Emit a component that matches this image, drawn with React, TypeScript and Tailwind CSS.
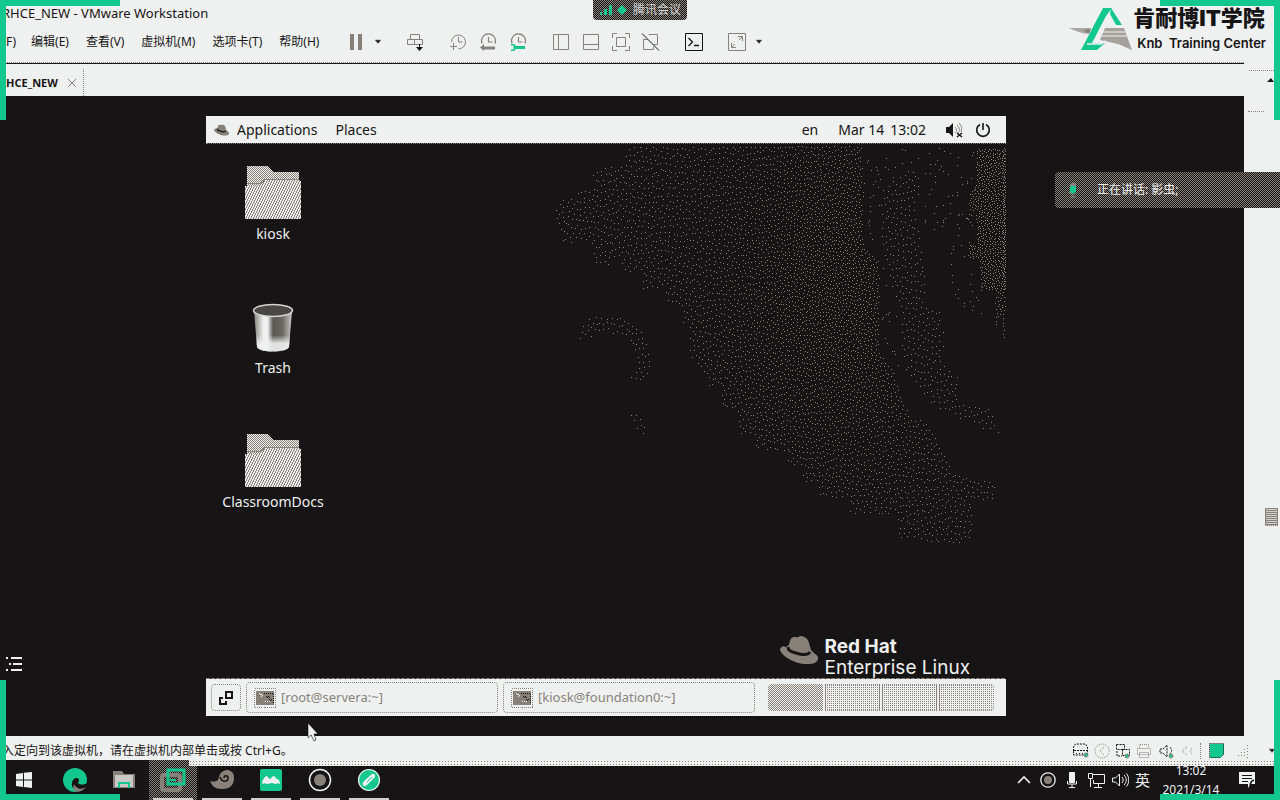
import type { ReactNode } from "react";

const INK = "#161415";
const GRAY = "#88817a";
const LIGHT = "#eff1f0";
const GREEN = "#12c88e";

const uiFont = "font-['Noto_Sans','Noto_Sans_CJK_SC',sans-serif]";

/* ---------- wallpaper ---------- */

type Point = [number, number];
type Region = { points: Point[]; density: (x: number, y: number) => number; scatter?: boolean };

const regions: Region[] = [
  {
    points: [[1308, 12], [1398, 12], [1398, 440], [1320, 440], [1320, 345], [1283, 345], [1283, 300], [1308, 300], [1308, 200], [1283, 195], [1285, 150], [1308, 110]],
    density: (x) => (x > 1388 ? 0.3 : 0.14),
  },
  { points: [[1365, 440], [1398, 440], [1398, 580], [1386, 580], [1386, 500], [1365, 560]], density: () => 0.1 },
  {
    points: [[255, 0], [970, 0], [970, 300], [1020, 350], [1020, 620], [1065, 680], [1090, 760], [1110, 805], [1165, 830], [1215, 920], [1240, 970], [1300, 1000], [1370, 1000], [1370, 1060], [1305, 1070], [1305, 1160], [1285, 1200], [1075, 1185], [1065, 1110], [930, 1110], [925, 1060], [835, 1060], [830, 1015], [785, 1015], [780, 968], [740, 968], [738, 920], [640, 915], [635, 872], [590, 872], [588, 800], [540, 790], [538, 728], [500, 725], [490, 680], [470, 670], [445, 625], [443, 540], [422, 535], [420, 488], [375, 485], [372, 438], [300, 432], [298, 388], [250, 380], [235, 340], [200, 365], [158, 365], [155, 295], [65, 295], [35, 205], [60, 155], [105, 155], [107, 130], [155, 130], [155, 85], [180, 60], [250, 60]],
    density: (x, y) => 0.04 + 0.052 * Math.exp(-(((x - 890) / 240) ** 2)) * Math.exp(-(((y - 420) / 420) ** 2)),
  },
  {
    points: [[1020, 130], [1110, 60], [1150, 90], [1130, 200], [1160, 380], [1160, 480], [1210, 490], [1210, 650], [1260, 690], [1260, 770], [1350, 780], [1390, 880], [1270, 830], [1190, 800], [1130, 730], [1080, 640], [1080, 500], [1050, 430], [1020, 300]],
    density: () => 0.036,
  },
  {
    points: [[970, 12], [1308, 12], [1300, 440], [1365, 560], [1310, 520], [1240, 460], [1220, 250], [1150, 260], [1020, 480], [970, 300]],
    density: () => 0.012,
    scatter: true,
  },
  { points: [[1020, 480], [1080, 500], [1080, 640], [1130, 730], [1040, 640]], density: () => 0.012, scatter: true },
  { points: [[110, 585], [115, 545], [150, 508], [245, 508], [310, 555], [337, 640], [320, 708], [262, 708], [290, 650], [265, 585], [200, 562], [130, 585]], density: () => 0.04 },
  { points: [[255, 795], [300, 800], [325, 850], [318, 875], [275, 850]], density: () => 0.035 },
];

function inside([px, py]: Point, poly: Point[]) {
  let hit = false;
  for (let i = 0, j = poly.length - 1; i < poly.length; j = i++) {
    const [xi, yi] = poly[i];
    const [xj, yj] = poly[j];
    if (yi > py !== yj > py && px < ((xj - xi) * (py - yi)) / (yj - yi) + xi) hit = !hit;
  }
  return hit;
}

function noise(x: number, y: number) {
  const n = Math.sin(x * 12.9898 + y * 78.233) * 43758.5453;
  return n - Math.floor(n);
}

/* Serpentine error diffusion: alternate rows run in opposite directions. */
function buildStipple(width: number, height: number) {
  let next = new Float32Array(width + 2);
  let d = "";
  for (let y = 0; y < height; y++) {
    const row = next;
    next = new Float32Array(width + 2);
    const dir = y % 2 ? -1 : 1;
    for (let i = 0; i < width; i++) {
      const x = dir > 0 ? i : width - 1 - i;
      const p: Point = [x * 3, y * 3];
      const region = regions.find((r) => inside(p, r.points));
      if (!region) continue;
      const density = region.density(p[0], p[1]);
      if (region.scatter) {
        if (noise(x, y) < density) d += `M${x} ${y}h1v1h-1z`;
        continue;
      }
      const value = density + row[x + 1];
      const on = value > 0.5 + (noise(x, y) - 0.5) * 0.5;
      const err = value - (on ? 1 : 0);
      if (on) d += `M${x} ${y}h1v1h-1z`;
      row[x + 1 + dir] += (err * 7) / 16;
      next[x + 1 - dir] += (err * 3) / 16;
      next[x + 1] += (err * 5) / 16;
      next[x + 1 + dir] += err / 16;
    }
  }
  return d;
}

const stipple = buildStipple(466, 404);

/* ---------- icons ---------- */

function Icon({ children, size = 24, className = "" }: { children: ReactNode; size?: number; className?: string }) {
  return (
    <svg width={size} height={size} viewBox={`0 0 ${size} ${size}`} fill="none" stroke={GRAY} className={className} aria-hidden="true">
      {children}
    </svg>
  );
}

const Caret = () => (
  <svg width="12" height="8" viewBox="0 0 12 8" aria-hidden="true">
    <path d="M3 2h6L6 5.500z" fill={INK} stroke={GRAY} strokeWidth=".6" />
  </svg>
);

function ClockFace({ children }: { children: ReactNode }) {
  return (
    <Icon>
      <path d="M6 13.500a7 7 0 1 1 13 0M12.500 7v5h4" strokeWidth="1.200" />
      {children}
    </Icon>
  );
}

function Folder() {
  return (
    <svg width="58" height="54" viewBox="0 0 58 54" aria-hidden="true" shapeRendering="crispEdges">
      <defs>
        <pattern id="folderBack" width="2" height="2" patternUnits="userSpaceOnUse">
          <rect width="2" height="2" fill={LIGHT} />
          <path d="M0 0h1v1h-1zM1 1h1v1h-1z" fill={GRAY} />
        </pattern>
        <pattern id="folderFront" width="5" height="5" patternUnits="userSpaceOnUse">
          <rect width="5" height="5" fill={LIGHT} />
          <path d="M0 0h1v1h-1zM2 1h1v1h-1zM4 2h1v1h-1zM1 3h1v1h-1zM3 4h1v1h-1zM2 0h1v1h-1zM4 1h1v1h-1zM1 2h1v1h-1zM3 3h1v1h-1zM0 4h1v1h-1z" fill={GRAY} />
        </pattern>
      </defs>
      <path d="M3 0h21l5 6h26v16H3z" fill="url(#folderBack)" />
      <path d="M3 18h13l5-4h34v-1H21l-6 4H3z" fill={GRAY} />
      <path d="M1 20h14l6-6h35l1 2v37H1z" fill="url(#folderFront)" />
    </svg>
  );
}

function TrashCan() {
  return (
    <svg width="58" height="54" viewBox="0 0 58 54" aria-hidden="true">
      <defs>
        <linearGradient id="can" x1="0" x2="1">
          <stop offset="0" stopColor={GRAY} />
          <stop offset=".25" stopColor={LIGHT} />
          <stop offset=".36" stopColor={LIGHT} />
          <stop offset=".5" stopColor="#5a5652" />
          <stop offset=".75" stopColor="#6d6863" />
          <stop offset="1" stopColor="#c9c8c5" />
        </linearGradient>
        <linearGradient id="canBase" x1="0" x2="0" y1="0" y2="1">
          <stop offset=".6" stopColor={LIGHT} stopOpacity="0" />
          <stop offset=".8" stopColor={LIGHT} stopOpacity=".9" />
        </linearGradient>
      </defs>
      <g transform="translate(0 2)">
        <path d="M10 9l3 36c2 6 30 6 32 0l3-36z" fill="url(#can)" />
        <path d="M10 9l3 36c2 6 30 6 32 0l3-36z" fill="url(#canBase)" />
        <ellipse cx="29" cy="8.500" rx="19.500" ry="6" fill="#4a4744" stroke="#d4d4d1" strokeWidth="1.600" />
      </g>
    </svg>
  );
}

function Hat({ className }: { className: string }) {
  return (
    <svg viewBox="0 0 38 28" className={className} aria-hidden="true">
      <path d="M9 9C10 4 11 1 14 1c3 0 4 1 6-1 5 0 8 3 9 7l2 7 4 4c4 2 4 6 1 8-2 2-6 2-12 2C15 27 2 21 0 14c0-2 1-3 4-4 1 2 2 1 5-1z" fill={GRAY} />
      <path d="M8 11c0 3 3 5 8 6 6 2 12 2 14-1" fill="none" stroke={INK} strokeWidth="3" />
    </svg>
  );
}

function TerminalIcon() {
  return (
    <svg width="22" height="20" viewBox="0 0 22 20" aria-hidden="true" shapeRendering="crispEdges">
      <rect x=".5" y=".5" width="21" height="19" fill="none" stroke={GRAY} strokeDasharray="1 1" />
      <rect x="2" y="3" width="18" height="14" fill={GRAY} />
      <path d="M5 5l4 3-4 3M11 13h6" stroke={LIGHT} strokeDasharray="1 1" fill="none" />
      <path d="M10 5h9v10M12 8l5 5M14 8l4 4" stroke={INK} strokeDasharray="1 1" fill="none" />
    </svg>
  );
}

/* ---------- host window ---------- */

const menus = ["编辑(E)", "查看(V)", "虚拟机(M)", "选项卡(T)", "帮助(H)"];

function ToolButton({ label, children }: { label: string; children: ReactNode }) {
  return (
    <button type="button" aria-label={label} className="flex h-6 items-center">
      {children}
    </button>
  );
}

function MenuBar() {
  return (
    <div className="flex h-9 items-center pb-1 pl-1.5">
      <nav className="flex w-[338px] gap-[17px] text-[12px] leading-5">
        <button type="button" className="-mr-0.5">F)</button>
        {menus.map((m) => (
          <button type="button" key={m} className="whitespace-nowrap">{m}</button>
        ))}
      </nav>
      <div className="flex gap-[19px]">
        <div className="flex gap-1">
          <ToolButton label="暂停">
            <Icon><path d="M6 4h4v16h-4zM14 4h4v16h-4z" fill={GRAY} stroke="none" /></Icon>
          </ToolButton>
          <ToolButton label="电源选项"><Caret /></ToolButton>
        </div>
        <ToolButton label="发送 Ctrl+Alt+Del">
          <Icon>
            <path d="M7.500 4.500h9v5h-9zM4.500 9.500h7v5h-7zM11.500 9.500h8v5h-8z" />
            <path d="M16.500 14v4" stroke={INK} />
            <path d="M13 17h7l-3.500 4z" fill={INK} stroke="none" />
          </Icon>
        </ToolButton>
        <div className="flex gap-1.5">
          <ToolButton label="拍摄快照">
            <Icon>
              <path d="M5.500 12a7 7 0 1 1 7 7M12.500 7v5h4M4 16.500h7M7.500 13v7" />
            </Icon>
          </ToolButton>
          <ToolButton label="恢复快照">
            <ClockFace><path d="M4 17.500l4-3.500v2.500h11v3H8V21z" fill={GRAY} stroke="none" /></ClockFace>
          </ToolButton>
          <ToolButton label="管理快照">
            <ClockFace>
              <path d="M5 14h3l2 2h9v3h-9l-2 2H5v-1.500h2.500v-4H5z" fill={GREEN} stroke="none" />
            </ClockFace>
          </ToolButton>
        </div>
        <div className="flex gap-1.5">
          <ToolButton label="显示库">
            <Icon><path d="M4.500 4.500h15v15h-15zM9.500 4.500v15" /></Icon>
          </ToolButton>
          <ToolButton label="缩略图栏">
            <Icon><path d="M4.500 4.500h15v15h-15zM4.500 14.500h15" /></Icon>
          </ToolButton>
          <ToolButton label="全屏">
            <Icon><path d="M3.500 8V3.500H8M16 3.500h4.500V8M20.500 16v4.500H16M8 20.500H3.500V16M7.500 7.500h9v9h-9z" /></Icon>
          </ToolButton>
          <ToolButton label="Unity">
            <Icon>
              <path d="M9.500 4.500h9v10h-4M4.500 9v10.500h10v-3M4.500 9.500h4" />
              <path d="M3 3.500l17 17" stroke={INK} />
            </Icon>
          </ToolButton>
        </div>
        <ToolButton label="控制台">
          <Icon>
            <path d="M3.500 3.500h17v17h-17z" stroke={INK} />
            <path d="M6.500 8l4 4-4 4M12 15.500h5" stroke={INK} strokeWidth="1.300" />
          </Icon>
        </ToolButton>
        <div className="flex gap-1">
          <ToolButton label="拉伸">
            <Icon>
              <path d="M3.500 3.500h17v17h-17z" />
              <path d="M13 6.500h4.500V11M11 17.500H6.500V13M17 7l-3 3M7 17l3-3" />
            </Icon>
          </ToolButton>
          <ToolButton label="拉伸选项"><Caret /></ToolButton>
        </div>
      </div>
    </div>
  );
}

function DesktopItem({ label, children }: { label: string; children: ReactNode }) {
  return (
    <button type="button" className="flex flex-col items-center gap-1 text-[14px] leading-5 text-[#eff1f0]">
      {children}
      <span>{label}</span>
    </button>
  );
}

function Guest() {
  return (
    <section className="flex min-w-0 flex-1 flex-col text-[14px]">
      <header className="flex h-[27px] items-center bg-[#eff1f0] pl-2 pr-[15px] leading-5">
        <Hat className="h-3 w-[15px]" />
        <button type="button" className="ml-2">Applications</button>
        <button type="button" className="ml-[18px]">Places</button>
        <button type="button" className="ml-auto">en</button>
        <button type="button" className="ml-5 flex gap-1.5">
          <span>Mar 14</span>
          <span>13:02</span>
        </button>
        <button type="button" aria-label="System menu" className="ml-5 flex items-center gap-3">
          <svg width="17" height="16" viewBox="0 0 17 16" fill="none" aria-hidden="true">
            <path d="M0 5h3l4-4v14l-4-4H0z" fill={INK} />
            <path d="M9 5c2 2 2 4 0 6M11 3c3 3 3 6 1 8M13 1c3 3 3 6 2 9" stroke={GRAY} />
            <path d="M11 11l5 4M16 11l-5 4" stroke={INK} strokeWidth="1.500" />
          </svg>
          <svg width="16" height="16" viewBox="0 0 16 16" fill="none" stroke={INK} strokeWidth="1.600" aria-hidden="true">
            <path d="M5 2.500a6.300 6.300 0 1 0 6 0M8 1v7" />
          </svg>
        </button>
      </header>
      <div className="border-t border-dotted border-[#88817a]" />
      <div className="relative flex flex-1 flex-col">
        <svg width="466" height="404" viewBox="0 0 466 404" className="absolute right-0 top-0" shapeRendering="crispEdges" aria-hidden="true">
          <path d={stipple} fill={GRAY} />
        </svg>
        <div className="relative flex w-[134px] flex-col items-center gap-14 pt-[22px]">
          <DesktopItem label="kiosk"><Folder /></DesktopItem>
          <DesktopItem label="Trash"><TrashCan /></DesktopItem>
          <DesktopItem label="ClassroomDocs"><Folder /></DesktopItem>
        </div>
        <div className="relative mt-auto flex justify-end gap-1.5 pr-9">
          <Hat className="h-7 w-[38px]" />
          <div className="font-['Inter','Noto_Sans',sans-serif] text-[19px] leading-[21px] text-[#eff1f0]">
            <p className="font-bold">Red Hat</p>
            <p>Enterprise Linux</p>
          </div>
        </div>
      </div>
      <div className="h-px bg-[repeating-linear-gradient(90deg,#88817a_0_4px,#161415_4px_5px)]" />
      <footer className="flex h-[37px] items-center gap-[5px] bg-[#eff1f0] pl-[5px] pr-3 text-[13px] text-[#88817a]">
        <button type="button" aria-label="Show desktop" className="flex h-[27px] w-[30px] items-center justify-center rounded border border-dotted border-[#88817a]">
          <svg width="16" height="16" viewBox="0 0 16 16" fill="none" stroke={INK} strokeWidth="2" aria-hidden="true">
            <path d="M8 2h6v6H8zM5 8H2v6h6v-3" />
          </svg>
        </button>
        {["[root@servera:~]", "[kiosk@foundation0:~]"].map((t) => (
          <button type="button" key={t} className="flex h-[31px] flex-1 items-center gap-[5px] rounded border border-dotted border-[#88817a] pl-[7px]">
            <TerminalIcon />
            <span>{t}</span>
          </button>
        ))}
        <div className="ml-2 flex gap-0.5">
          <button type="button" aria-label="Workspace 1" className="h-[27px] w-[55px] rounded-l bg-[#eff1f0] bg-[conic-gradient(#88817a_25%,#eff1f0_0_50%,#88817a_0_75%,#eff1f0_0)] bg-[length:2px_2px]" />
          {[2, 3, 4].map((n) => (
            <button
              type="button"
              key={n}
              aria-label={`Workspace ${n}`}
              className="h-[27px] w-[55px] border border-dotted border-[#88817a] bg-[conic-gradient(#88817a_25%,#eff1f0_0)] bg-[length:2px_2px] last:rounded-r"
            />
          ))}
        </div>
      </footer>
    </section>
  );
}

/* ---------- host status and task bars ---------- */

function StatusBar() {
  return (
    <div className="flex h-6 items-center justify-between pl-0.5 pr-0.5 pt-1.5">
      <p className="text-[12px] leading-5">入定向到该虚拟机，请在虚拟机内部单击或按 Ctrl+G。</p>
      <div className="flex items-center gap-[3px]">
        <Icon size={18}>
          <path d="M1.500 9V5l2-3h10l2 3v8h-14zM2 8.500h13M4 11.500h1M7 11.500h1M10 11.500h1" strokeDasharray="2 1" stroke={INK} />
          <circle cx="14" cy="13" r="2" fill={GREEN} stroke={GRAY} />
        </Icon>
        <Icon size={18}>
          <circle cx="9" cy="9" r="7" strokeDasharray="1 1" />
          <path d="M11 5L7 9l4 4" strokeDasharray="1 1" />
        </Icon>
        <Icon size={18}>
          <path d="M2.500 2.500h8v5h-8zM8.500 7.500h7v6h-7zM3 9v5h5" strokeDasharray="2 1" stroke={INK} />
          <circle cx="13" cy="14" r="2" fill={GREEN} stroke={GRAY} />
        </Icon>
        <Icon size={18}>
          <path d="M4.500 6V2.500h9V6M2.500 6.500h13v6h-13zM4.500 10.500h9v5h-9z" strokeDasharray="1 1" />
        </Icon>
        <Icon size={18} className="ml-0.5">
          <path d="M2 7h3l4-4v12l-4-4H2zM12 5c2 2 2 5 0 7" strokeDasharray="2 1" stroke={INK} />
          <circle cx="13" cy="14" r="2" fill={GREEN} stroke={GRAY} />
        </Icon>
        <Icon size={18}>
          <path d="M8 5L3 9l5 4M13 6c-2 2-2 4 0 6" strokeDasharray="1 1" />
        </Icon>
        <span className="h-4 border-l border-dotted border-[#88817a]" />
        <Icon size={18} className="ml-1">
          <path d="M2 2h14v10l-4 4H2z" fill={GREEN} stroke="none" />
          <path d="M1.500 1.500h14v11l-3 3h-11z" strokeDasharray="1 1" stroke={INK} />
        </Icon>
        <Icon size={18} className="ml-1">
          <path d="M14.500 3v13M11.500 7v9M8.500 10v6M5.500 13v3" strokeDasharray="1 2" />
        </Icon>
        <span className="ml-3"><Caret /></span>
      </div>
    </div>
  );
}

function Task({ label, running, children }: { label: string; running?: boolean; children: ReactNode }) {
  return (
    <button type="button" aria-label={label} className="flex h-10 w-12 flex-col items-center justify-between pt-[7px]">
      {children}
      {running && <span className="h-0.5 w-10 bg-[#d2d1ce]" />}
    </button>
  );
}

function TaskBar() {
  return (
    <div className="relative flex h-10 items-stretch bg-[#161415] text-[#eff1f0]">
      <div className="absolute left-[189px] right-0 top-0 h-1.5 bg-[#eff1f0] bg-[radial-gradient(circle_at_center,#88817a_0_0.5px,transparent_0.6px)] bg-[length:3px_3px]" />
      <div className="flex gap-px">
        <Task label="开始">
          <svg width="26" height="26" viewBox="0 0 26 26" aria-hidden="true" fill={LIGHT}>
            <path d="M5 7l7-1v6.500H5zM13 5.800L21 5v7.500h-8zM5 13.500h7V20l-7-1zM13 13.500h8V21l-8-1z" />
          </svg>
        </Task>
        <span className="w-px" />
        <Task label="Microsoft Edge">
          <svg width="26" height="26" viewBox="0 0 26 26" aria-hidden="true">
            <circle cx="13" cy="13" r="12" fill={GREEN} />
            <path d="M12 22c-4-4-2-10 2-11 3 0 4 2 2 5 2 2 6 2 9 0 0 4-3 8-7 9-3 0-5-1-6-3z" fill={INK} />
            <path d="M12 17c2 5 8 6 12 3-3 4-8 6-11 4-2-1-2-4-1-7z" fill={GRAY} />
          </svg>
        </Task>
        <Task label="文件资源管理器">
          <svg width="26" height="26" viewBox="0 0 26 26" aria-hidden="true">
            <path d="M2 4h9l2 3h11v14H2z" fill={GRAY} />
            <path d="M4 8h18v12H4z" fill="#c9c8c5" />
            <path d="M8 21v-5h10v5" fill="none" stroke={GREEN} strokeWidth="2" />
          </svg>
        </Task>
        <div className="bg-[conic-gradient(#88817a_25%,#161415_0_50%,#88817a_0_75%,#161415_0)] bg-[length:2px_2px]">
          <Task label="VMware Workstation" running>
            <svg width="26" height="26" viewBox="0 0 26 26" aria-hidden="true" fill="none">
              <rect x="2" y="8" width="18" height="15" rx="2" stroke={GRAY} strokeWidth="4" />
              <rect x="8" y="3" width="16" height="14" stroke={GREEN} strokeWidth="3" />
              <path d="M10 13h6" stroke={GREEN} strokeWidth="2" />
            </svg>
          </Task>
        </div>
        <Task label="小鸟" running>
          <svg width="26" height="26" viewBox="0 0 26 26" aria-hidden="true">
            <path d="M1 14c5 1 8 1 9-4 1-5 5-7 9-7 4 1 6 3 6 8 0 8-5 11-12 11S3 19 1 14z" fill={GRAY} />
            <path d="M11 10c2 6 8 5 8 1 0-3-4-3-4 0" stroke={INK} strokeWidth="1.500" fill="none" />
          </svg>
        </Task>
        <Task label="会议" running>
          <svg width="26" height="26" viewBox="0 0 26 26" aria-hidden="true">
            <rect x="2" y="2" width="22" height="22" rx="2" fill={GREEN} />
            <path d="M4 17c0-4 2-6 4-8 2 0 3 3 4 3s2-3 4-3c1 0 2 3 3 3 2 0 3 3 3 5-2-1-3-1-4 0-2 0-3-1-4-1s-3 1-5 1c-2-1-3-1-5 0z" fill={LIGHT} />
          </svg>
        </Task>
        <Task label="录制" running>
          <svg width="26" height="26" viewBox="0 0 26 26" aria-hidden="true">
            <circle cx="13" cy="13" r="10.500" fill="none" stroke={LIGHT} strokeWidth="1.500" />
            <circle cx="13" cy="13" r="6" fill={GRAY} />
          </svg>
        </Task>
        <Task label="画笔" running>
          <svg width="26" height="26" viewBox="0 0 26 26" aria-hidden="true">
            <circle cx="13" cy="13" r="10.500" fill={GREEN} stroke={LIGHT} strokeWidth="1.200" />
            <path d="M7 18c-1-1 0-3 1-4l8-7c2-1 4 1 3 3l-8 8c-1 1-3 2-4 0z" fill={LIGHT} />
            <path d="M11 15l5-5" stroke={GREEN} strokeWidth="1" />
          </svg>
        </Task>
      </div>
      <div className="ml-auto flex items-center gap-1.5 pr-6">
        <Icon size={18}><path d="M3 12l6-6 6 6" stroke={LIGHT} strokeWidth="1.600" /></Icon>
        <Icon size={18}>
          <circle cx="9" cy="9" r="7.200" stroke={LIGHT} strokeWidth="1.300" />
          <circle cx="9" cy="9" r="4" fill={GRAY} stroke="none" />
        </Icon>
        <Icon size={18}>
          <rect x="6" y="1" width="6" height="11" rx="1" fill={LIGHT} stroke="none" />
          <path d="M4.500 10v3h9v-3M9 13v4M6 16.500h6" stroke={LIGHT} />
        </Icon>
        <Icon size={18}>
          <path d="M5 3.500h12.500v9H6.500V9M11.500 12.500v4M7 16.500h8M1.500 2.500h4v5h-4zM3.500 8v8" stroke={LIGHT} />
        </Icon>
        <Icon size={18}>
          <path d="M1.500 7h3l4-4v12l-4-4h-3zM11 6c1.500 2 1.500 4 0 6M13 4c3 3 3 7 0 10M15.500 2.500c3 4 3 9 0 13" stroke={LIGHT} />
        </Icon>
        <button type="button" className="text-[15px] leading-5">英</button>
        <button type="button" className="ml-1 w-[62px] text-center text-[12px] leading-[19px]">
          <span className="block">13:02</span>
          <span className="block">2021/3/14</span>
        </button>
        <button type="button" aria-label="通知" className="ml-2.5">
          <svg width="18" height="18" viewBox="0 0 18 18" aria-hidden="true">
            <path d="M1 1h16v12h-4l-3 4v-4H1z" fill={LIGHT} />
            <path d="M4 4.500h10M4 7.500h10M4 10.500h6" stroke={INK} />
            <path d="M12 16c0-4 1-6 4-7" stroke={INK} strokeWidth="1.500" fill="none" />
          </svg>
        </button>
      </div>
    </div>
  );
}

/* ---------- overlays ---------- */

function Frame() {
  return (
    <>
      <div className="pointer-events-none absolute left-0 top-0 h-[120px] w-[120px] border-l-[6px] border-t-[6px] border-[#12c88e]" />
      <div className="pointer-events-none absolute right-0 top-0 h-[120px] w-[120px] border-r-[6px] border-t-[6px] border-[#12c88e]" />
      <div className="pointer-events-none absolute bottom-0 left-0 h-[120px] w-[120px] border-b-[6px] border-l-[6px] border-[#12c88e]" />
      <div className="pointer-events-none absolute bottom-0 right-0 h-[120px] w-[120px] border-b-[6px] border-r-[6px] border-[#12c88e]" />
    </>
  );
}

function Brand() {
  return (
    <div className="absolute right-3.5 top-[7px] flex">
      <svg width="64" height="45" viewBox="0 0 64 45" aria-hidden="true">
        <path d="M0 21h22l-4 6c-6-1-12-3-18-6z" fill="#aaa6a1" />
        <path d="M14 23l8-1-2 5z" fill={GRAY} />
        <path d="M36 21h19l8 22-14-6-18-4z" fill="#a5a19c" />
        <path d="M34 25h22M33 29h25" stroke={LIGHT} strokeWidth="1" />
        <path d="M34 1h9l-6 8-14 27h13l-8 7H12z" fill={GREEN} />
        <path d="M42 1l11 17h-6l-6-11z" fill={GREEN} />
        <path d="M18 37h14l5-3" stroke={LIGHT} strokeWidth="1.500" fill="none" />
      </svg>
      <div className="text-[#161415]">
        <p className="font-['Inter','Noto_Sans_CJK_SC',sans-serif] text-[22px] font-black leading-[23px]">肯耐博IT学院</p>
        <p className="whitespace-pre pl-1 font-['Inter',sans-serif] text-[13px] font-semibold leading-[26px]">Knb  Training Center</p>
      </div>
    </div>
  );
}

function MeetingPill() {
  return (
    <div className="absolute left-1/2 top-0 flex h-5 w-[94px] -translate-x-1/2 items-center gap-1.5 rounded-b bg-[conic-gradient(#88817a_25%,#161415_0_50%,#88817a_0_75%,#161415_0)] bg-[length:2px_2px] pl-1.5 text-[#d2d1ce]">
      <svg width="28" height="12" viewBox="0 0 28 12" aria-hidden="true" fill={GREEN}>
        <path d="M1 8h2v3H1zM5 5h3v6H5zM10 1h3v10h-3zM23 1l5 5-5 5-5-5z" />
      </svg>
      <span className="whitespace-nowrap text-[12px] leading-5">腾讯会议</span>
    </div>
  );
}

function Speaker() {
  return (
    <div className="absolute right-0 top-[172px] flex h-9 w-[225px] items-center gap-[18px] rounded-l bg-[conic-gradient(#88817a_25%,#161415_0_50%,#88817a_0_75%,#161415_0)] bg-[length:2px_2px] pl-3 text-[12px] text-[#eff1f0]">
      <svg width="12" height="16" viewBox="0 0 12 16" aria-hidden="true" fill="none">
        <path d="M3 7V3c0-3 6-3 6 0v4" fill={GRAY} />
        <path d="M3 4h6v6l-3 2-3-2z" fill={GREEN} />
        <path d="M2 10c1 3 7 3 8 0M6 13v2M3 15h6" stroke={GRAY} />
      </svg>
      <span>正在讲话: 影虫;</span>
    </div>
  );
}

export default function App() {
  return (
    <main className={`relative flex min-h-screen flex-col bg-[#eff1f0] text-[#161415] ${uiFont}`}>
      <h1 className="flex h-[26px] items-center pl-0.5 text-[13px] leading-5">RHCE_NEW - VMware Workstation</h1>
      <MenuBar />
      <div className="mr-9">
        <div className="border-t border-dotted border-[#88817a]" />
        <div className="h-px bg-[#161415]" />
      </div>
      <div className="flex h-8 items-stretch justify-between">
        <div className="mt-[5px] flex items-center gap-2 border-r border-dotted border-[#88817a] pl-1.5 pr-[5px]">
          <span className="text-[11px] font-bold leading-5">HCE_NEW</span>
          <button type="button" aria-label="关闭标签页">
            <Icon size={12}><path d="M2 2l8 8M10 2l-8 8" /></Icon>
          </button>
        </div>
        <div className="flex w-[31px] flex-col items-end gap-1.5 pr-1.5 pt-1.5">
          <div className="w-full border-t border-dotted border-[#88817a]" />
          <svg width="8" height="6" viewBox="0 0 8 6" aria-hidden="true">
            <path d="M5 1l3 4H1z" fill={INK} />
          </svg>
        </div>
      </div>

      <div className="flex flex-1">
        <div className="flex min-w-0 flex-1 bg-[#161415] py-5 pr-[238px]">
          <aside className="flex w-[206px] flex-col justify-end pb-[42px] pl-1.5">
            <button type="button" aria-label="目录" className="w-4">
              <svg width="16" height="20" viewBox="0 0 16 20" stroke={LIGHT} strokeWidth="2" aria-hidden="true">
                <path d="M5 4h11M7 10h9M5 16h11" />
                <path d="M0 4h2M3 10h2M0 16h2" />
              </svg>
            </button>
          </aside>
          <Guest />
        </div>
        <div className="flex w-9 flex-col gap-[396px] pl-1 pr-0.5 pt-[15px]">
          <div className="w-4 border-t border-dotted border-[#88817a]" />
          <div className="h-[18px] w-[13px] self-end border border-dotted border-[#88817a] bg-[repeating-linear-gradient(0deg,#88817a_0_1px,#d2d1ce_1px_2px)]" />
        </div>
      </div>

      <StatusBar />
      <TaskBar />

      <MeetingPill />
      <Brand />
      <Speaker />
      <Frame />
      <svg width="12" height="20" viewBox="0 0 12 20" className="absolute left-[307px] top-[722px]" aria-hidden="true">
        <path d="M1 1v15l3-3 3 6 2-1-2-6h4z" fill={LIGHT} stroke={INK} strokeWidth=".6" />
      </svg>
    </main>
  );
}
